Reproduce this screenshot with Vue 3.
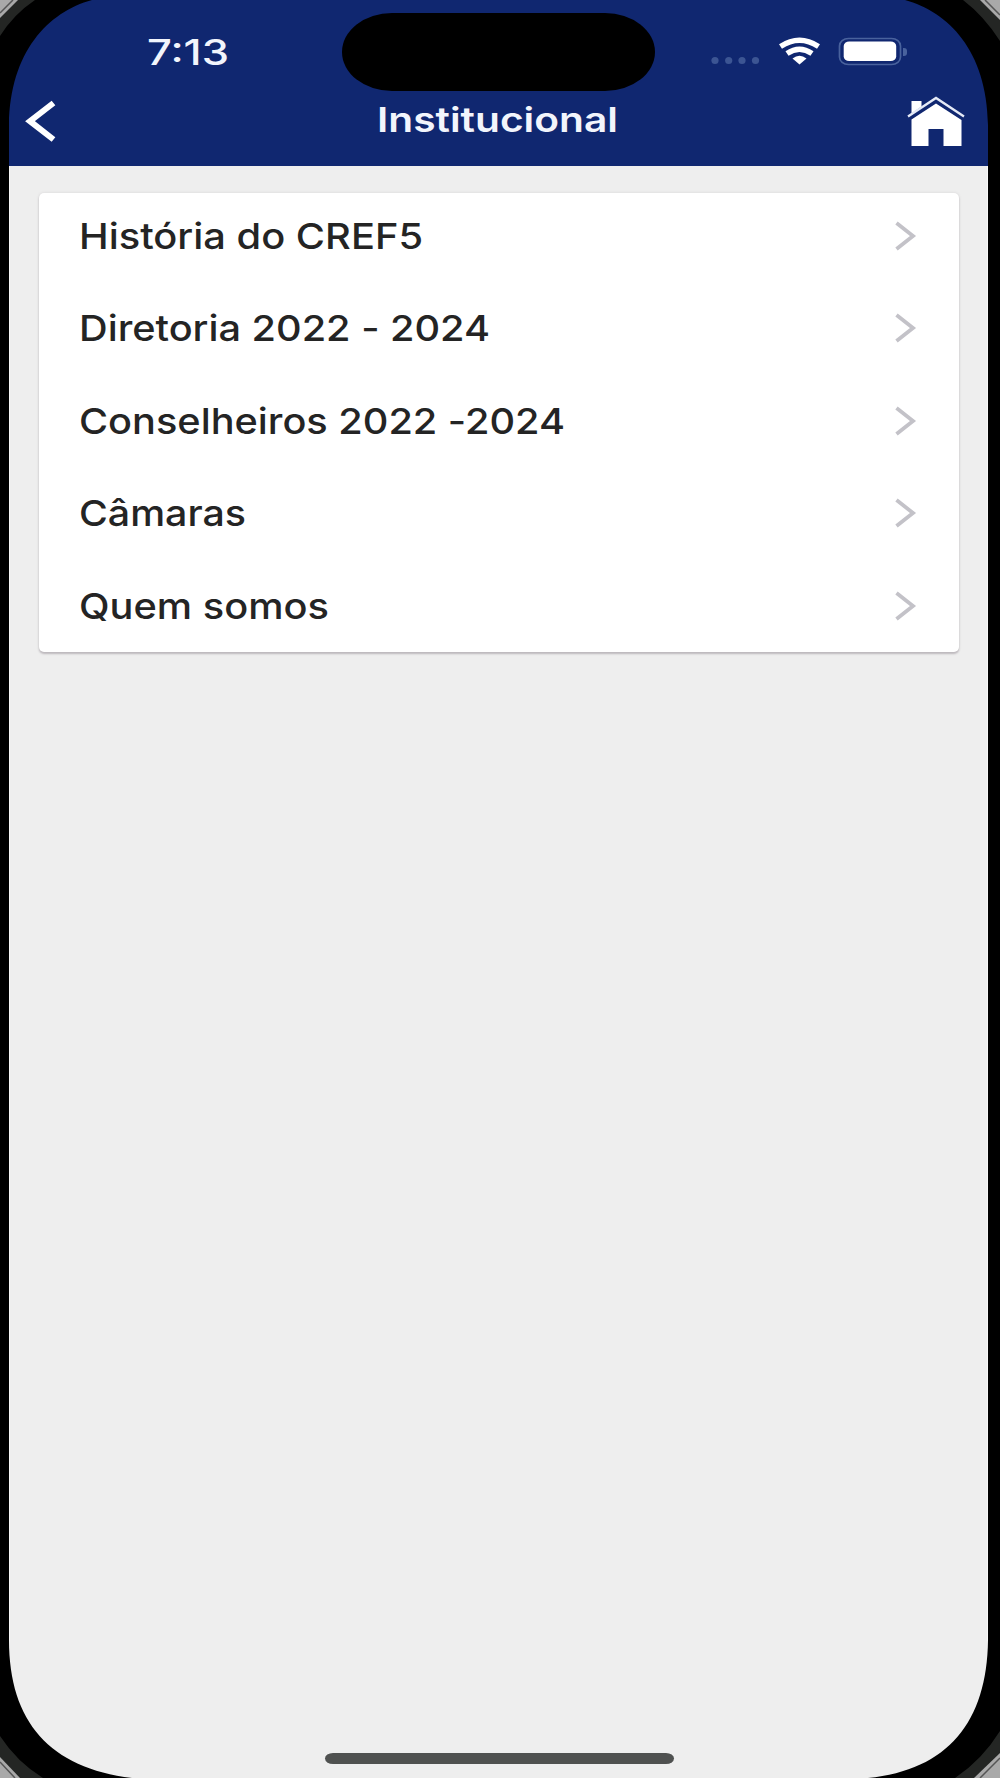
<template>
  <div class="phone">
    <div class="screen">
      <header class="header">
        <div class="status-bar">
          <svg class="time" width="90" height="56" viewBox="0 0 90 56">
            <text x="1" y="42.500" textLength="82" lengthAdjust="spacingAndGlyphs">7:13</text>
          </svg>
          <div class="island"></div>
          <div class="status-icons">
            <svg width="200" height="40" viewBox="700 32 200 40">
              <g fill="#3c5593">
                <circle cx="715" cy="60.500" r="3.6" />
                <circle cx="728.7" cy="60.500" r="3.6" />
                <circle cx="742" cy="60.500" r="3.6" />
                <circle cx="755.5" cy="60.500" r="3.6" />
              </g>
              <g fill="none" stroke="#fff" stroke-width="5.400">
                <path d="M780.500 46.500 Q799.500 34 818.500 46.500" />
                <path d="M787 53.500 Q799.500 45 812 53.500" />
              </g>
              <path d="M792.500 58.500 Q799.500 53 806.500 58.500 L799.500 64.500 Z" fill="#fff" />
              <rect x="839.5" y="38.500" width="61" height="26" rx="9" ry="7.5" fill="none" stroke="#49629d" stroke-width="1.7" />
              <rect x="843.7" y="41.500" width="52.5" height="19.6" rx="5.5" ry="4.5" fill="#fff" />
            </svg>
            <div class="battery-cap"></div>
          </div>
        </div>

        <div class="nav-bar">
          <svg class="back" width="34" height="46" viewBox="24 98 34 46">
            <path d="M53.5 103 L30 121.2 L53.5 139.5" fill="none" stroke="#fff" stroke-width="6" />
          </svg>
          <svg class="title" width="250" height="44" viewBox="0 0 250 44">
            <text x="1" y="33.5" textLength="241" lengthAdjust="spacingAndGlyphs">Institucional</text>
          </svg>
          <svg class="home" width="60" height="54" viewBox="906 94 60 54">
            <path d="M911.500 101 H921.500 V106.500 L911.500 113.500 Z" fill="#fff" />
            <path d="M908 116.500 L936 98 L964 116.500" fill="none" stroke="#e5eaf6" stroke-width="2.3" />
            <path d="M936 103.500 L961.500 120 V146 H943.500 V129 H928.500 V146 H911.500 V119.500 Z" fill="#fff" />
          </svg>
        </div>
      </header>

      <main class="content">
        <ul class="card">
          <li v-for="item in items" :key="item.label" class="row">
            <svg width="560" height="50" viewBox="0 0 560 50">
              <text x="0" y="38" :textLength="item.width" lengthAdjust="spacingAndGlyphs">{{ item.label }}</text>
            </svg>
            <svg width="22" height="32" viewBox="0 0 22 32">
              <path d="M1.5 3 L18 16 L1.5 29" fill="none" stroke="#c3c2c8" stroke-width="3.8" />
            </svg>
          </li>
        </ul>
      </main>

      <div class="home-indicator"></div>
    </div>

    <!-- rounded corners of the device -->
    <svg class="bezel" width="1000" height="1778" viewBox="0 0 1000 1778">
      <g fill="#000">
        <path d="M0 0 H92 C48 12 10 52 9 125 H0 Z" />
        <path d="M1000 0 H905 C948 12 987 50 988 125 H1000 Z" />
        <path d="M0 1778 H132 C50 1768 9 1722 9 1640 H0 Z" />
        <path d="M1000 1778 H868 C948 1770 987 1722 988 1640 H1000 Z" />
      </g>
      <g fill="#242624">
        <path d="M0 0 H35 Q14 14 0 36 Z" />
        <path d="M1000 0 H963 Q984 16 1000 41 Z" />
        <path d="M0 1778 H43 Q17 1762 0 1736 Z" />
        <path d="M1000 1778 H955 Q982 1760 1000 1731 Z" />
      </g>
      <g fill="#a9a9a9">
        <path d="M0 0 H18 L0 18 Z" />
        <path d="M1000 0 H980 L1000 20 Z" />
        <path d="M0 1778 H20 L0 1757 Z" />
        <path d="M1000 1778 H974 L1000 1753 Z" />
      </g>
      <g stroke="#555" stroke-width="1.5">
        <path d="M0 13 L13 0 M985 0 L1000 15 M0 1762 L15 1778 M980 1778 L1000 1758" />
      </g>
    </svg>
  </div>
</template>

<script setup>
// width = rendered length of the label, the font is slightly extended
const items = [
  { label: 'História do CREF5', width: 344 },
  { label: 'Diretoria 2022 - 2024', width: 411 },
  { label: 'Conselheiros 2022 -2024', width: 486 },
  { label: 'Câmaras', width: 167 },
  { label: 'Quem somos', width: 250 }
]
</script>

<style>
body {
  margin: 0;
  background: #000;
}
</style>

<style scoped>
.phone {
  position: relative;
  box-sizing: border-box;
  width: 1000px;
  height: 1778px;
  padding: 0 12px 0 9px;
  background: #000;
  overflow: hidden;
  font-family: Inter, "Liberation Sans", sans-serif;
}

.bezel {
  position: absolute;
  top: 0;
  left: 0;
}

.screen {
  display: flex;
  flex-direction: column;
  height: 100%;
  background: #eee;
}

svg {
  display: block;
  flex-shrink: 0;
}

/* === Header === */
.header {
  height: 166px;
  background: #102770;
}

.status-bar {
  display: flex;
  height: 91px;
  padding-top: 13px;
  box-sizing: border-box;
}

.time {
  margin: 9px 106px 0 137px;
}

.time text {
  fill: #f2f5fc;
  font-size: 35px;
  font-weight: 550;
}

.island {
  flex-shrink: 0;
  width: 313px;
  height: 77.5px;
  border-radius: 50px / 39px;
  background: #000;
}

.status-icons {
  display: flex;
  margin: 19px 0 0 45px;
}

.status-icons svg {
  overflow: visible;
}

.battery-cap {
  width: 4px;
  height: 8px;
  margin: 15.5px 0 0 3px;
  border-radius: 0 3px 3px 0;
  background: #49629d;
}

.nav-bar {
  display: flex;
  align-items: flex-start;
  justify-content: space-between;
  padding: 3px 22px 0 15px;
}

.back {
  margin-top: 4px;
}

.title {
  margin: 4px 0 0 38px;
}

.title text {
  fill: #f2f5fc;
  font-size: 34px;
  font-weight: 600;
}

/* === List === */
.content {
  flex: 1;
  padding: 26.5px 28px 0 29px;
  border: solid #f7f7f7;
  border-width: 0 1px;
}

.card {
  height: 459px;
  margin: 0;
  padding: 0;
  list-style: none;
  border-radius: 5px;
  background: #fff;
  box-shadow: 0 2px 2px #bdb9bd, 0 0 3px #d5d3d5;
}

.row {
  display: flex;
  align-items: center;
  justify-content: space-between;
  box-sizing: border-box;
  height: 92.5px;
  padding: 0 42px 0 40px;
}

/* first row sits closer to the top edge */
.row:first-child {
  height: 89.5px;
  padding-bottom: 3px;
}

/* calt off, otherwise Inter lifts the dash between the years */
.row text {
  fill: #242424;
  font-size: 36px;
  font-weight: 450;
  font-feature-settings: "calt" 0;
}

.home-indicator {
  align-self: center;
  width: 349px;
  height: 11px;
  margin: 0 0 14px 1px;
  border-radius: 8px / 5.5px;
  background: #4f5150;
}
</style>
